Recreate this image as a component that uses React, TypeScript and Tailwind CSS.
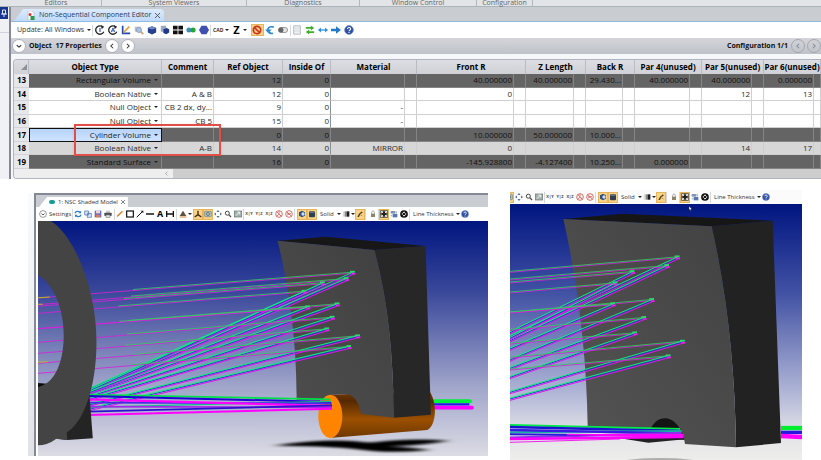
import type { ReactNode } from 'react'
import clsx from 'clsx'

type Point = [number, number]

interface Row {
  id: number
  type: string
  tone: 'dark' | 'light' | 'grey'
  comment?: string
  ref: string
  inside: string
  material?: string
  params: string[]
}

const rows: Row[] = [
  { id: 13, type: 'Rectangular Volume', tone: 'dark', ref: '12', inside: '0', params: ['40.000000', '40.000000', '29.430...', '40.000000', '40.000000', '0.000000'] },
  { id: 14, type: 'Boolean Native', tone: 'light', comment: 'A & B', ref: '12', inside: '0', params: ['0', '', '', '', '12', '13'] },
  { id: 15, type: 'Null Object', tone: 'light', comment: 'CB 2 dx, dy...', ref: '9', inside: '0', material: '-', params: ['', '', '', '', '', ''] },
  { id: 16, type: 'Null Object', tone: 'light', comment: 'CB 5', ref: '15', inside: '0', material: '-', params: ['', '', '', '', '', ''] },
  { id: 17, type: 'Cylinder Volume', tone: 'dark', ref: '0', inside: '0', params: ['10.000000', '50.000000', '10.000...', '', '', ''] },
  { id: 18, type: 'Boolean Native', tone: 'grey', comment: 'A-B', ref: '14', inside: '0', material: 'MIRROR', params: ['0', '', '', '', '14', '17'] },
  { id: 19, type: 'Standard Surface', tone: 'dark', ref: '16', inside: '0', params: ['-145.928800', '-4.127400', '10.250...', '0.000000', '', ''] },
]

const paramHeaders = ['Front R', 'Z Length', 'Back R', 'Par 4(unused)', 'Par 5(unused)', 'Par 6(unused)']

const objectTypes = ['Rectangular Volume', 'Boolean Native', 'Null Object', 'Cylinder Volume', 'Standard Surface']

/* ---------- icons ---------- */

function Tool({ label, on, wide, children }: { label: string; on?: boolean; wide?: boolean; children: ReactNode }) {
  return (
    <button
      aria-label={label}
      className={clsx(
        'flex shrink-0 items-center justify-center',
        wide ? 'h-3 w-[13px]' : 'h-[11px] w-[10px]',
        on && 'bg-[#fbd386] outline outline-[#e6b45c] -outline-offset-1'
      )}
    >
      <svg viewBox="0 0 12 12" className={wide ? 'size-[10px]' : 'size-2'} fill="none">
        {children}
      </svg>
    </button>
  )
}

function Divider() {
  return <div className="h-[11px] w-px shrink-0 bg-[#d4d9e0]" />
}

function Caret() {
  return <span className="inline-block shrink-0 border-x-2 border-t-2 border-x-transparent border-t-[#222]" />
}

const help = (
  <>
    <circle cx="6" cy="6" r="5.3" fill="#2d4fa8" stroke="#7a8cb8" strokeWidth="0.8" />
    <path d="M4.2 4.8c0-2.5 3.8-2.4 3.8 0 0 1.3-1.9 1.2-1.9 2.6M6 8.3v1.3" stroke="#fff" strokeWidth="1.3" />
  </>
)

const noEntry = (
  <>
    <circle cx="6" cy="6" r="4.4" stroke="#c8321e" strokeWidth="2" />
    <path d="M3 3l6 6" stroke="#c8321e" strokeWidth="2" />
  </>
)

const cube = <path d="M1 3.5l5-2 5 2v5.5L6 11.5 1 9z" fill="#24408f" />

/* ---------- shared tools of the shaded model windows ---------- */

function ViewTools({ clipped }: { clipped?: boolean }) {
  return (
    <>
      <div className={clsx('flex shrink-0 overflow-hidden', clipped && 'w-1 justify-end')}>
        <Tool label="Rotate" on>
          <rect x="1" y="2" width="10" height="8" rx="1" fill="#b7c4c0" stroke="#6e8080" />
          <circle cx="6" cy="6" r="2.3" stroke="#4b6a78" strokeWidth="1.2" />
        </Tool>
      </div>
      <Tool label="Pan">
        <path d="M6 0l2.3 3H3.7zM6 12l2.3-3H3.7zM0 6l3-2.3v4.6zM12 6L9 3.7v4.6z" fill="#56709c" />
      </Tool>
      <Tool label="Zoom">
        <circle cx="5" cy="4.8" r="3" stroke="#444" strokeWidth="1.5" />
        <path d="M7.2 7l3.3 3.5" stroke="#444" strokeWidth="1.8" />
      </Tool>
      <Tool label="Reset view">
        <rect x="0.5" y="1.5" width="11" height="9" fill="#a3b2ac" stroke="#66756f" />
        <path d="M3 8.5l5-5M5 3h3.5v3.5" stroke="#f2f5f3" strokeWidth="1.4" />
      </Tool>
      <Divider />
      {['X|Y', 'Y|Z', 'X|Z'].map((plane) => (
        <button key={plane} className="w-[10px] shrink-0 text-center text-[4px] font-bold leading-3 text-[#444]">
          {plane}
        </button>
      ))}
      <Tool label="Hide axis">
        <circle cx="6" cy="6" r="5" stroke="#d0584c" strokeWidth="1.3" />
        <path d="M2 9.5l4-3 4 2.5M6 6.5V1.5M2.5 2.5l7 7" stroke="#c96b62" strokeWidth="1.2" />
      </Tool>
      <Tool label="Hide rays">
        <circle cx="6" cy="6" r="5" stroke="#d0584c" strokeWidth="1.3" />
        <path d="M2.5 2.5l7 7M3 7.5l6-2M3 5h5" stroke="#c96b62" strokeWidth="1.2" />
      </Tool>
      <Divider />
      <div className="w-0.5" />
      <Tool label="Lighting" on>
        <path d="M1.5 3.5L6 1l4.5 2.5v5L6 11 1.5 8.5z" fill="#2e4f86" />
        <circle cx="7.5" cy="6" r="2.5" fill="#c8e0f0" />
      </Tool>
      <Tool label="Solid cylinder" on>
        <rect x="1.5" y="2" width="9" height="9" rx="1.5" fill="#2f4054" />
        <path d="M2.5 3.5h7" stroke="#8ba0b4" />
      </Tool>
      <label className="ml-[3px] flex h-3 shrink-0 items-center gap-px">
        <select aria-label="Shading" className="w-4 appearance-none bg-transparent leading-3">
          <option>Solid</option>
        </select>
        <Caret />
      </label>
      <Tool label="Background">
        <rect x="1" y="2" width="3" height="8" fill="#ddd" />
        <rect x="4" y="2" width="3" height="8" fill="#888" />
        <rect x="7" y="2" width="4" height="8" fill="#1c1c1c" />
      </Tool>
      <Caret />
      <Tool label="Ray colors" on>
        <path d="M2 10.5l2.5-5L9 2l1 2-3.5 2-2 4.5" fill="#4a3a20" />
        <path d="M6.5 7l3 2" stroke="#8c6d30" />
      </Tool>
      <Divider />
      <div className="w-0.5" />
      <Tool label="Lock">
        <path d="M4 6V3.5C4 .8 8 .8 8 3.5V6" stroke="#999" strokeWidth="1.2" />
        <rect x="3" y="5.5" width="6" height="5" fill="#8d8368" />
      </Tool>
      <Divider />
      <Tool label="Fit to window" on>
        <rect x="0.5" y="0.5" width="11" height="11" fill="#222" />
        <path d="M2 5V2h3M10 5V2H7M2 7v3h3M10 7v3H7M2 2l8 8M10 2l-8 8" stroke="#fff" strokeWidth="1.3" />
        <rect x="4.5" y="4.5" width="3" height="3" fill="#222" />
      </Tool>
      <Tool label="Clone window">
        <rect x="1" y="1.5" width="7" height="4" fill="#8195b8" />
        <rect x="4" y="6" width="7" height="5" fill="#5b76ad" />
        <path d="M2 7.5v2M9.5 2v3" stroke="#5b76ad" />
      </Tool>
      <Tool label="Reset">
        <circle cx="6" cy="6" r="5.8" fill="#111" />
        <path d="M3.5 7a3 3 0 0 1 4-3.5M8.5 5a3 3 0 0 1-4 3.5" stroke="#fff" strokeWidth="1.5" />
      </Tool>
      <Divider />
      <button className="ml-[3px] flex h-3 shrink-0 items-center gap-0.5">
        Line Thickness
        <Caret />
      </button>
      <Tool label="Help">{help}</Tool>
    </>
  )
}

/* ---------- ray drawing ---------- */

// incoming start, hit point on the mirror, end of the reflected part
type RayPath = [Point, Point, Point]

const leftRays: RayPath[] = [
  [[57, 322], [1005, 247], [210, 602]],
  [[57, 342], [986, 266], [210, 606]],
  [[57, 347], [915, 279], [210, 598]],
  [[57, 368], [860, 304], [210, 603]],
  [[57, 414], [959, 342], [210, 613]],
  [[57, 414], [870, 351], [210, 608]],
  [[57, 455], [944, 382], [210, 620]],
  [[57, 488], [928, 417], [210, 628]],
  [[57, 518], [1020, 438], [210, 645]],
  [[57, 548], [994, 470], [210, 658]],
]

const rightRays: RayPath[] = [
  [[30, 260], [538, 216], [30, 455]],
  [[30, 283], [507, 242], [30, 467]],
  [[30, 292], [403, 260], [30, 443]],
  [[30, 322], [352, 294], [30, 460]],
  [[30, 382], [462, 344], [30, 525]],
  [[30, 382], [345, 357], [30, 492]],
  [[30, 434], [438, 398], [30, 550]],
  [[30, 475], [411, 444], [30, 577]],
  [[30, 517], [554, 469], [30, 622]],
  [[30, 553], [511, 513], [30, 642]],
]

function Rays({ rays, greenFrom = 0 }: { rays: RayPath[]; greenFrom?: number }) {
  return (
    <g fill="none">
      {rays.map(([start, hit, end]) => {
        const gx = start[0] + (hit[0] - start[0]) * greenFrom
        const gy = start[1] + (hit[1] - start[1]) * greenFrom
        return (
          <g key={hit.join()}>
            <path d={`M${start[0]} ${start[1] + 2}L${hit[0]} ${hit[1] + 2}`} stroke="#d324d6" strokeWidth="2.5" />
            <path d={`M${gx} ${gy - 1}L${hit[0]} ${hit[1] - 1}`} stroke="#35c964" strokeWidth="2.5" />
            <path d={`M${hit[0]} ${hit[1] + 4}L${end[0]} ${end[1] + 4}`} stroke="#e212f0" strokeWidth="3" />
            <path d={`M${hit[0]} ${hit[1]}L${end[0]} ${end[1]}`} stroke="#2a3ccf" strokeWidth="3" />
            <path d={`M${hit[0]} ${hit[1] - 3}L${end[0]} ${end[1] - 3}`} stroke="#10ee80" strokeWidth="3" />
            <path d={`M${hit[0] - 14} ${hit[1] - 2}h14`} stroke="#28e068" strokeWidth="5" />
            <path d={`M${hit[0] - 10} ${hit[1] + 4}h12`} stroke="#e81ee8" strokeWidth="5" />
          </g>
        )
      })}
    </g>
  )
}

function LeftScene() {
  return (
    <svg viewBox="57 93 1347 705" preserveAspectRatio="none" className="block h-[235px] w-full" role="img" aria-label="Shaded model">
      <defs>
        <linearGradient id="sky" x1="0" y1="0" x2="0" y2="1">
          <stop offset="0" stopColor="#00157f" />
          <stop offset="0.3" stopColor="#3a489a" />
          <stop offset="0.7" stopColor="#9fa4ca" />
          <stop offset="1" stopColor="#dcdce4" />
        </linearGradient>
        <linearGradient id="barrel" x1="0" y1="0" x2="0" y2="1">
          <stop offset="0" stopColor="#7a3c00" />
          <stop offset="0.2" stopColor="#542900" />
          <stop offset="0.6" stopColor="#9c5000" />
          <stop offset="1" stopColor="#6e3800" />
        </linearGradient>
        <linearGradient id="plate" x1="0" y1="1" x2="1" y2="0">
          <stop offset="0" stopColor="#4e4e4e" />
          <stop offset="1" stopColor="#404040" />
        </linearGradient>
        <filter id="soft" x="-20%" y="-50%" width="140%" height="200%">
          <feGaussianBlur stdDeviation="16 3" />
        </filter>
      </defs>
      <rect x="57" y="93" width="1347" height="705" fill="url(#sky)" />
      <path d="M765 767Q930 742 1050 758Q1180 742 1285 752Q1200 768 1110 768Q1190 774 1230 780Q1130 790 1050 782Q960 768 765 767z" fill="#050505" filter="url(#soft)" />

      <path d="M1234 634L1350 634" stroke="#00f03c" strokeWidth="12" strokeLinecap="round" />
      <path d="M1234 643h114" stroke="#2418e8" strokeWidth="7" />
      <path d="M1234 653h122" stroke="#ff00ff" strokeWidth="11" strokeLinecap="round" />

      {/* barrel, then the mirror block that is cut by it */}
      <path d="M932 614L990 612L1230 605C1252 640 1250 705 1222 720L938 743z" fill="url(#barrel)" />
      <path d="M774 152L920 140L1217 168L1064 180z" fill="#171717" />
      <path d="M1064 180L1217 168L1233 674L1122 683C1121 500 1105 330 1064 180z" fill="#272727" />
      <path d="M774 152L1064 180C1105 330 1121 500 1122 683L1024 672C1015 622 994 612 970 612L932 615L900 632L831 629C832 450 806 280 774 152z" fill="url(#plate)" />
      <ellipse cx="932" cy="679" rx="36" ry="65" fill="#ff8500" />

      <Rays rays={leftRays} greenFrom={0.3} />
      <g fill="none">
        <path d="M205 614L932 628" stroke="#00e04a" strokeWidth="5" />
        <path d="M205 618L934 636" stroke="#2000d8" strokeWidth="6" />
        <path d="M205 652L934 634" stroke="#18b890" strokeWidth="4" />
        <path d="M205 638L936 640" stroke="#4030e0" strokeWidth="5" />
        <path d="M205 628L937 648" stroke="#ff00ff" strokeWidth="7" />
        <path d="M205 650L937 652" stroke="#a428e8" strokeWidth="5" />
        <path d="M205 665L937 646" stroke="#2c10d0" strokeWidth="5" />
        <path d="M205 675L937 656" stroke="#ff00ff" strokeWidth="6" />
      </g>
      <path d="M57 323L92 321M57 343h14M57 517L86 515" stroke="#b9b526" strokeWidth="3" />

      {/* lens ring and its stand */}
      <path d="M210 602L221 745L145 750L112 746L140 700z" fill="#242424" />
      <path d="M57 579L84 581L57 594z" fill="#0c0c0c" />
      <path
        fillRule="evenodd"
        d="M57 93H95C160 130 232 290 232 455C232 600 190 700 143 727L145 750L112 746Q85 766 57 766V591C110 580 134 510 134 437C134 355 104 282 57 255z"
        fill="#444"
      />
    </svg>
  )
}

function RightScene() {
  return (
    <svg viewBox="30 57 876 768" preserveAspectRatio="none" className="block h-64 w-full" role="img" aria-label="Shaded model, cylinder removed">
      <defs>
        <linearGradient id="skyRight" x1="0" y1="0" x2="0" y2="1">
          <stop offset="0" stopColor="#001580" />
          <stop offset="0.35" stopColor="#4252a4" />
          <stop offset="0.75" stopColor="#b4b9d8" />
          <stop offset="0.9" stopColor="#e4e4e8" />
          <stop offset="1" stopColor="#ededeb" />
        </linearGradient>
        <linearGradient id="plateRight" x1="0" y1="1" x2="1" y2="0">
          <stop offset="0" stopColor="#545454" />
          <stop offset="1" stopColor="#424242" />
        </linearGradient>
      </defs>
      <rect x="30" y="57" width="876" height="768" fill="url(#skyRight)" />
      <path d="M380 824Q480 816 580 824z" fill="#999" />
      <path d="M843 729h63" stroke="#00ee30" strokeWidth="13" />
      <path d="M843 742h63" stroke="#2a18e0" strokeWidth="10" />
      <path d="M843 753L906 756" stroke="#ff00ff" strokeWidth="13" />

      <path d="M360 760L550 750L555 763L445 773z" fill="#222" />
      <path d="M440 695H560V765L440 755z" fill="#141414" />
      <path d="M190 102L370 86L818 107L635 124z" fill="#161616" />
      <path d="M635 124L818 107L843 774L708 787C706 560 682 330 635 124z" fill="#222" />
      <path d="M190 102L635 124C682 330 706 560 708 787L555 777C549 730 522 700 495 700C475 700 462 712 453 730L263 724C260 500 232 290 190 102z" fill="url(#plateRight)" />

      <Rays rays={rightRays} />
      <g fill="none">
        <path d="M30 720L540 732" stroke="#00e84a" strokeWidth="6" />
        <path d="M30 726L540 738" stroke="#1a14d0" strokeWidth="7" />
        <path d="M30 742L545 738" stroke="#18b0a0" strokeWidth="6" />
        <path d="M30 735L545 745" stroke="#3a1ae0" strokeWidth="7" />
        <path d="M30 758L545 744" stroke="#9030e8" strokeWidth="7" />
        <path d="M30 748L550 752" stroke="#2818d8" strokeWidth="6" />
        <path d="M200 747L551 747L551 758L200 751z" fill="#ff00ff" />
        <path d="M30 762L550 756" stroke="#ff00ff" strokeWidth="7" />
        <path d="M30 772L360 762" stroke="#ee20ee" strokeWidth="3" />
      </g>
      <path d="M567 64v11l3-2 2 4 2-1-2-4 3-1z" fill="#fff" stroke="#222" strokeWidth="1" />
    </svg>
  )
}

/* ---------- editor ---------- */

function EditorToolbar() {
  return (
    <div className="flex h-[17px] items-center border-t border-[#8ebbe0] bg-white pl-[6px] text-[7px] text-[#333]">
      <button className="flex w-[75px] items-center gap-[3px] whitespace-nowrap">
        Update: All Windows
        <Caret />
      </button>
      <Divider />
      <Tool label="Update" wide>
        <path d="M8 1.5A5 5 0 1 0 10.5 8" stroke="#222" strokeWidth="1.6" />
        <path d="M7 0l4 2-3 3z" fill="#222" />
        <path d="M6 3.5v5" stroke="#3b62b8" strokeWidth="1.5" />
      </Tool>
      <Tool label="Update all" wide>
        <path d="M8 1.5A5 5 0 1 0 10.5 8" stroke="#222" strokeWidth="1.6" />
        <path d="M7 0l4 2-3 3z" fill="#222" />
        <path d="M4 8.5l2-5 2 5M4.5 7h3" stroke="#3b62b8" strokeWidth="1.2" />
      </Tool>
      <Tool label="Tilt axes" wide>
        <path d="M2 1v9h9" stroke="#2647b0" strokeWidth="2" />
        <path d="M3 9l7-7" stroke="#e5a33c" strokeWidth="2" />
      </Tool>
      <Tool label="Inspect object" wide>
        <rect x="1" y="2" width="7" height="6" fill="#b6bccb" />
        <circle cx="6" cy="6" r="3" fill="#a9c4ea" stroke="#8796b2" />
        <path d="M8 8l3 3" stroke="#d0a070" strokeWidth="2" />
      </Tool>
      <Tool label="Solid object" wide>
        {cube}
        <path d="M1 3.5l5 2 5-2-5-2z" fill="#6f88c8" />
      </Tool>
      <Tool label="Copy object" wide>
        <path d="M1 1h6l1 4-4 3H1z" fill="#9aa7c4" />
        <path d="M4 5l4-1.5L11 5v4l-3.5 2L4 9.5z" fill="#20398a" />
      </Tool>
      <Tool label="Array" wide>
        <path d="M0 1h5.5v4.5H0zM6.5 1H12v4.5H6.5zM0 6.5h5.5V11H0zM6.5 6.5H12V11H6.5z" fill="#111" />
      </Tool>
      <Tool label="Combine" wide>
        <circle cx="3.5" cy="6" r="3" fill="#3b8fb8" />
        <circle cx="8.5" cy="6" r="3" fill="#22a532" />
      </Tool>
      <Tool label="Polygon object" wide>
        <path d="M3 1h6l3 5-3 5H3L0 6z" fill="#3f50b0" />
      </Tool>
      <Divider />
      <button className="ml-0.5 flex items-center gap-0.5 text-[5px] font-bold leading-3">
        CAD
        <Caret />
      </button>
      <button className="mx-1 flex items-center gap-[3px] text-[11px] font-bold leading-3 text-black">
        Z
        <Caret />
      </button>
      <Tool label="Ignore errors" on wide>
        {noEntry}
      </Tool>
      <Tool label="Undo" wide>
        <path d="M10.5 2.5C5 1 2.500 4 4 7c1 2.500 3.500 3.500 5.500 3" stroke="#2d8bc8" strokeWidth="2" />
        <path d="M0 5.500h8L4 10z" fill="#2d8bc8" />
      </Tool>
      <Tool label="Toggle" wide>
        <rect x="0.5" y="3" width="11" height="6" rx="3" fill="#e4e4e4" stroke="#888" />
        <circle cx="3.5" cy="6" r="3" fill="#666" />
      </Tool>
      <Divider />
      <Tool label="Sheet" wide>
        <path d="M2 1h8v10H2z" fill="#eef1f4" stroke="#a9b0b8" />
        <path d="M2 4h8M2 7h8" stroke="#c8ced6" strokeWidth="0.8" />
      </Tool>
      <Tool label="Swap" wide>
        <path d="M1 3.5h7M11 8.5H4" stroke="#3fae2a" strokeWidth="2" />
        <path d="M7 .5l4 3-4 3zM5 5.5l-4 3 4 3z" fill="#3fae2a" />
      </Tool>
      <Tool label="Stretch" wide>
        <path d="M1 6h10" stroke="#2a93dc" strokeWidth="1.6" />
        <path d="M0 6l3.5-3v6zM12 6L8.5 3v6z" fill="#2a93dc" />
      </Tool>
      <Tool label="Go to" wide>
        <path d="M0 4.5h6V1.5L12 6l-6 4.5v-3H0z" fill="#2378c8" />
      </Tool>
      <Tool label="Help" wide>
        {help}
      </Tool>
    </div>
  )
}

function RoundButton({ label, muted, children }: { label: string; muted?: boolean; children: ReactNode }) {
  return (
    <button
      aria-label={label}
      className={clsx(
        'flex size-[14px] shrink-0 items-center justify-center rounded-full border',
        muted ? 'border-[#a4a7ae] text-[#85888f]' : 'border-[#aeb1b8] bg-white text-[#333]'
      )}
    >
      <svg viewBox="0 0 8 8" className="size-[6px]" fill="none" stroke="currentColor" strokeWidth="1.4">
        {children}
      </svg>
    </button>
  )
}

const chevronDown = <path d="M1 3l3 2.5L7 3" />
const chevronLeft = <path d="M5.5 1L2.5 4l3 3" />
const chevronRight = <path d="M2.5 1l3 3-3 3" />

function ObjectTable() {
  const line = 'border-r border-b border-[#cfcfcf]'
  return (
    <table className="h-[109px] w-full table-fixed border-separate border-spacing-0 text-[8px] leading-3 text-[#2c2c2c]">
      <colgroup>
        <col className="w-[15px]" />
        <col className="w-[133px]" />
        <col className="w-[52px]" />
        <col className="w-[69px]" />
        <col className="w-[48px]" />
        <col className="w-[74px]" />
        <col className="w-3" />
        <col className="w-[97px]" />
        <col className="w-3" />
        <col className="w-[48px]" />
        <col className="w-3" />
        <col className="w-[37px]" />
        <col className="w-3" />
        <col className="w-[55px]" />
        <col className="w-3" />
        <col className="w-[50px]" />
        <col className="w-3" />
        <col className="w-[50px]" />
        <col />
      </colgroup>
      <thead>
        <tr className="h-[14px] bg-gradient-to-b from-[#dcdee3] to-[#cfd1d7] text-black [&>th]:border-r [&>th]:border-[#b9bcc4] [&>th]:p-0">
          <th aria-label="Row" className="rounded-tl">
            <div className="ml-[7px] size-[6px] bg-[#8d9098] [clip-path:polygon(100%_0,100%_100%,0_100%)]" />
          </th>
          <th>Object Type</th>
          <th>Comment</th>
          <th>Ref Object</th>
          <th>Inside Of</th>
          <th colSpan={2}>Material</th>
          {paramHeaders.map((header) => (
            <th key={header} colSpan={2} className="overflow-hidden whitespace-nowrap">
              {header}
            </th>
          ))}
        </tr>
      </thead>
      <tbody>
        {rows.map((row) => (
          <tr
            key={row.id}
            className={clsx(
              '[&>td]:overflow-hidden [&>td]:whitespace-nowrap [&>td]:py-0 [&>td]:pl-0 [&>td]:pr-px [&>td]:text-right',
              row.tone === 'dark' && 'bg-[#646464] text-[#111] [&>td]:border-[#858585]',
              row.tone === 'light' && 'bg-white',
              row.tone === 'grey' && 'bg-[#d7d7d7]'
            )}
          >
            <th className="border-b border-[#d2d4d9] bg-[#e6e7eb] p-0 text-black">{row.id}</th>
            <td className={clsx(line, row.id === 17 && 'bg-gradient-to-b from-[#b4d2fa] to-[#cfe3ff] text-[#222] outline outline-[#111] -outline-offset-1')}>
              <div className="flex items-center justify-end gap-[3px] pr-0.5">
                <select
                  aria-label={`Object ${row.id} type`}
                  defaultValue={row.type}
                  className="h-3 w-[100px] appearance-none bg-transparent text-right leading-3 [text-align-last:right]"
                >
                  {objectTypes.map((type) => (
                    <option key={type}>{type}</option>
                  ))}
                </select>
                <Caret />
              </div>
            </td>
            <td className={line}>{row.comment}</td>
            <td className={line}>{row.ref}</td>
            <td className={clsx(line, 'border-r-[#8f8f8f]')}>{row.inside}</td>
            <td className={line}>{row.material}</td>
            <td className={line} />
            {row.params.map((value, i) => [
              <td key={`value${i}`} className={line}>{value}</td>,
              <td key={`solve${i}`} className={line} />,
            ])}
          </tr>
        ))}
      </tbody>
    </table>
  )
}

function EditorWindow() {
  return (
    <section>
      <div className="flex h-[7px] border-b border-[#a9b5b8] bg-[#e3e4e7] pl-[11px] text-center text-[7px] leading-[5px] text-[#666]">
        <div className="w-[91px] shrink-0 border-r border-[#b4b7bc]">Editors</div>
        <div className="w-[145px] shrink-0 border-r border-[#b4b7bc]">System Viewers</div>
        <div className="w-[113px] shrink-0 border-r border-[#b4b7bc]">Diagnostics</div>
        <div className="w-[117px] shrink-0 border-r border-[#b4b7bc]">Window Control</div>
        <div className="w-[56px] shrink-0 border-r border-[#b4b7bc]">Configuration</div>
      </div>
      <div className="flex">
        <div className="w-[9px] shrink-0 bg-[#eff1f5]">
          <div className="flex h-3 w-2 items-center justify-center bg-[#17358c]">
            <svg viewBox="0 0 6 8" className="h-2 w-[6px]" fill="none" stroke="#dfe6fa">
              <path d="M1.5 1h3v4h-3zM0 5h6M3 5v3" />
            </svg>
          </div>
          <div className="mt-[13px] h-px bg-[#cfd3da]" />
        </div>
        <div className="min-w-0 flex-1 border-l-2 border-[#84889a] bg-[#f6f7f9]">
          <div className="flex h-[14px] items-end bg-[#c9ccd1] pl-[3px]">
            <div className="flex h-3 items-center rounded-tr-sm bg-gradient-to-b from-[#dceafc] to-[#c0dafa] pl-[13px] pr-1 text-[7px] text-[#2b3a52] [clip-path:polygon(9px_0,100%_0,100%_100%,0_100%)]">
              <svg viewBox="0 0 8 9" className="mr-1 h-[9px] w-2">
                <path d="M1 0h4l2 2v7H1z" fill="#fbfbfb" stroke="#aab" strokeWidth="0.5" />
                <circle cx="3" cy="3.5" r="1.5" fill="#d93a2c" />
                <rect x="3.5" y="5" width="4" height="4" fill="#2a9a4c" />
              </svg>
              <span className="whitespace-nowrap">Non-Sequential Component Editor</span>
              <button aria-label="Close editor" className="ml-1">
                <svg viewBox="0 0 6 6" className="size-[5px]" stroke="#444">
                  <path d="M0 0l6 6M6 0L0 6" />
                </svg>
              </button>
            </div>
          </div>
          <EditorToolbar />
          <div className="flex h-4 items-center bg-gradient-to-b from-[#d3d5da] to-[#bfc2c9] pl-px text-[7px] font-bold text-[#111]">
            <RoundButton label="Expand properties">{chevronDown}</RoundButton>
            <h1 className="ml-[3px] mr-[3px] whitespace-pre">Object  17 Properties</h1>
            <RoundButton label="Previous object">{chevronLeft}</RoundButton>
            <div className="w-0.5" />
            <RoundButton label="Next object">{chevronRight}</RoundButton>
            <div className="ml-auto mr-[3px]">Configuration 1/1</div>
            <RoundButton label="Previous configuration" muted>{chevronLeft}</RoundButton>
            <div className="w-0.5" />
            <RoundButton label="Next configuration" muted>{chevronRight}</RoundButton>
          </div>
          <div className="relative ml-0.5 mt-[5px] overflow-hidden rounded-l-sm border-b border-l border-[#aeb4c2] border-t">
            <ObjectTable />
            <div className="flex h-[9px] bg-[#eeeeee]">
              <button aria-label="Scroll left" className="flex w-[159px] items-center justify-end pr-1 text-[#888]">
                <svg viewBox="0 0 8 8" className="size-[5px]" fill="none" stroke="currentColor">
                  {chevronLeft}
                </svg>
              </button>
              <div className="flex-1 bg-[#cdcdcd]" />
            </div>
            {/* highlight around the cylinder and its boolean */}
            <div className="absolute left-[60px] top-[64px] h-8 w-[147px] border-2 border-[#e05048] shadow-sm" />
          </div>
        </div>
      </div>
    </section>
  )
}

/* ---------- shaded model windows ---------- */

function ModelWindow() {
  return (
    <section className="mt-[3px] flex min-w-0 flex-[460_1_0%] self-start text-[6px] text-[#333]">
      <div className="w-[6px] shrink-0 bg-gradient-to-b from-[#fafbfc] to-[#dfe3e8]" />
      <div className="min-w-0 flex-1 border-l-2 border-t-2 border-[#858895] bg-white">
        <div className="flex h-3 items-end bg-[#c9ccd1] pl-[3px]">
          <div className="flex h-[10px] items-center bg-white pl-[10px] pr-[3px] [clip-path:polygon(8px_0,100%_0,100%_100%,0_100%)]">
            <span className="mr-[3px] h-1 w-[6px] rounded-sm bg-[#169c96]" />
            <span className="whitespace-nowrap">1: NSC Shaded Model</span>
            <button aria-label="Close model" className="ml-[3px]">
              <svg viewBox="0 0 6 6" className="size-[4px]" stroke="#444">
                <path d="M0 0l6 6M6 0L0 6" />
              </svg>
            </button>
          </div>
        </div>
        <div className="flex h-[14px] items-center overflow-hidden whitespace-nowrap pl-[3px]">
          <button className="flex h-3 w-[33px] shrink-0 items-center gap-0.5">
            <svg viewBox="0 0 8 8" className="size-2 shrink-0" fill="none" stroke="#555">
              <circle cx="4" cy="4" r="3.4" strokeWidth="0.6" />
              <path d="M2.5 3.5L4 5l1.5-1.5" />
            </svg>
            Settings
          </button>
          <Divider />
          <Tool label="Refresh">
            <path d="M1.5 5C2 1.5 7 1 9 3.5M10.5 7C10 10.5 5 11 3 8.5" stroke="#2480c8" strokeWidth="1.8" />
            <path d="M10.5 1v4h-4zM1.5 11V7h4z" fill="#2480c8" />
          </Tool>
          <Tool label="Copy">
            <path d="M1 1.5h6v6H1zM5 5h6v6H5z" fill="#dbe6f7" stroke="#3c63b5" />
          </Tool>
          <Tool label="Save image">
            <rect x="1" y="1" width="10" height="10" fill="#6b6cc4" />
            <path d="M3 1h6v4H3z" fill="#f1d6d6" />
            <path d="M3 11V7h6v4" fill="#dc7c50" />
          </Tool>
          <Tool label="Print">
            <path d="M3 1h6v4H3z" fill="#ccc" />
            <rect x="0.5" y="4" width="11" height="5" rx="1" fill="#4c4f55" />
            <path d="M3 7.5h6V11H3z" fill="#eee" stroke="#777" />
          </Tool>
          <div className="w-px" />
          <Divider />
          <Tool label="Draw">
            <path d="M1 11l1-3 7-7 1.5 1.5-7 7z" fill="#d9822b" />
          </Tool>
          <Tool label="Rectangle">
            <rect x="1" y="1.5" width="10" height="9" stroke="#111" strokeWidth="1.8" />
          </Tool>
          <Tool label="Arrow">
            <path d="M1 11l8-8" stroke="#111" strokeWidth="1.5" />
            <path d="M11 1v4L7 1z" fill="#111" />
          </Tool>
          <Tool label="Line">
            <path d="M0 6h12" stroke="#111" strokeWidth="2.2" />
          </Tool>
          <button className="w-[10px] shrink-0 text-center text-[9px] font-bold leading-3 text-black">A</button>
          <Tool label="Dimension">
            <path d="M1 1.5v9M11 1.5v9M1 6h10" stroke="#111" strokeWidth="2" />
          </Tool>
          <div className="w-px" />
          <Divider />
          <div className="w-px" />
          <Tool label="Annotate">
            <path d="M6 1l5 8H1z" fill="#5e5040" />
            <path d="M1 10.5h10" stroke="#d98432" strokeWidth="1.5" />
          </Tool>
          <Caret />
          <div className="w-px" />
          <Tool label="Axes" on>
            <path d="M6 1v6L1 10.5M6 7l5 3.5" stroke="#3a2a10" strokeWidth="2" />
          </Tool>
          <ViewTools />
        </div>
        <div className="pl-0.5">
          <LeftScene />
        </div>
      </div>
    </section>
  )
}

function CroppedModel() {
  return (
    <section className="min-w-0 flex-[292_1_0%] text-[6px] text-[#333]">
      <div className="flex h-[14px] items-center overflow-hidden whitespace-nowrap bg-[#fbfbfb]">
        <ViewTools clipped />
      </div>
      <RightScene />
    </section>
  )
}

export default function App() {
  return (
    <main className="min-h-screen overflow-hidden bg-white font-['Open_Sans','Noto_Sans',sans-serif]">
      <EditorWindow />
      <div className="mt-[11px] flex gap-[22px] pl-7 pr-[19px]">
        <ModelWindow />
        <CroppedModel />
      </div>
    </main>
  )
}
